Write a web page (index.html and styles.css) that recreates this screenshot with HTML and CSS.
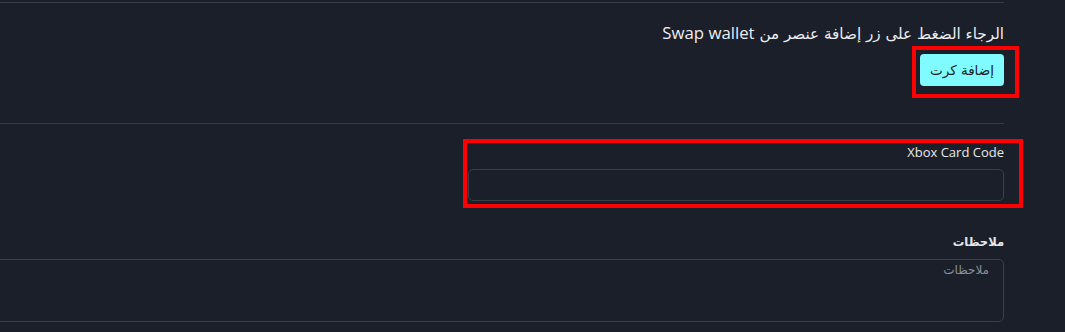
FILE: index.html
```html
<!DOCTYPE html>
<html lang="ar" dir="rtl">
<head>
<meta charset="utf-8">
<title>Xbox Card</title>
<link rel="stylesheet" href="styles.css">
</head>
<body>
<main class="page">
  <section class="block block-intro">
    <p class="hint">الرجاء الضغط على زر إضافة عنصر من <span class="latin">Swap wallet</span></p>
    <div class="btn-wrap marked marked-btn">
      <button class="btn" type="button">إضافة كرت</button>
    </div>
  </section>
  <section class="block block-form">
    <div class="row">
      <div class="field marked marked-field">
        <label class="label" for="code">Xbox Card Code</label>
        <input class="input" id="code" type="text">
      </div>
      <div class="field-empty"></div>
    </div>
    <div class="field notes">
      <label class="label label-bold" for="notes">ملاحظات</label>
      <textarea class="textarea" id="notes" placeholder="ملاحظات"></textarea>
    </div>
  </section>
</main>
</body>
</html>
```

FILE: styles.css
```css
html, body {
  margin: 0;
  padding: 0;
  background: #1b1f2a;
  overflow: hidden;
}
body {
  padding-top: 2px;
  font-family: "DejaVu Sans", "Noto Sans", sans-serif;
  color: #e6e8ec;
}
.page {
  margin-right: 61px;
  margin-left: -100px;
}
.block {
  border-top: 1px solid #363b46;
}
.block-intro {
  padding: 19px 0 37px;
  display: flex;
  flex-direction: column;
  align-items: flex-start;
}
.hint {
  margin: 0;
  font-size: 15.2px;
  line-height: 22px;
  color: #eceef2;
}
.latin {
  font-family: "Open Sans", "Liberation Sans", sans-serif;
  font-size: 16.8px;
}
.btn-wrap {
  margin-top: 9px;
  display: flex;
}
.btn {
  width: 84px;
  height: 32px;
  border: 0;
  border-radius: 4px;
  background: #80fbff;
  color: #1b1f2a;
  font-family: "DejaVu Sans", sans-serif;
  font-size: 13.5px;
  padding: 0;
}
.marked {
  position: relative;
}
.marked::after {
  content: "";
  position: absolute;
  border: 4px solid #ff0000;
  pointer-events: none;
}
.marked-btn::after {
  top: -8px;
  bottom: -12px;
  right: -15px;
  left: -8px;
}
.marked-field::after {
  top: -4px;
  bottom: -7px;
  right: -19px;
  left: -5px;
}
.block-form {
  padding-top: 19px;
}
.row {
  display: grid;
  grid-template-columns: 536px 1fr;
  gap: 32px;
}
.field {
  display: flex;
  flex-direction: column;
}
.label {
  font-family: "Open Sans", "DejaVu Sans", sans-serif;
  font-size: 13px;
  line-height: 18px;
  margin-bottom: 8px;
  color: #e6e8ec;
}
.label-bold {
  font-family: "DejaVu Sans", sans-serif;
  font-weight: bold;
  font-size: 11.5px;
}
.input {
  height: 32px;
  box-sizing: border-box;
  border: 1px solid #3a3f4a;
  border-radius: 5px;
  background: #1b1f2a;
  color: #e6e8ec;
  padding: 0 14px;
  outline: none;
}
.notes {
  margin-top: 32px;
}
.textarea {
  height: 63px;
  box-sizing: border-box;
  border: 1px solid #3a3f4a;
  border-radius: 5px;
  background: #1b1f2a;
  color: #e6e8ec;
  padding: 3px 14px;
  resize: none;
  outline: none;
  font-family: "DejaVu Sans", sans-serif;
  font-size: 12px;
}
.textarea::placeholder {
  color: #8b909a;
}
```
